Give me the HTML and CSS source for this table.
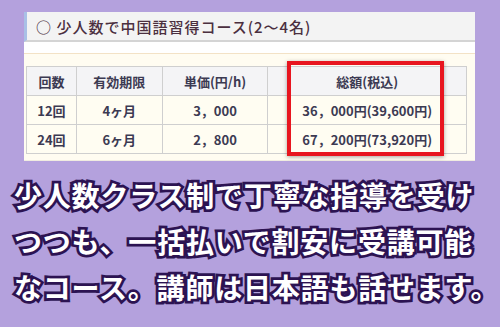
FILE: index.html
```html
<!DOCTYPE html>
<html lang="ja">
<head>
<meta charset="utf-8">
<link rel="stylesheet" href="styles.css">
</head>
<body>
<div class="panel">
  <div class="panel-head">○ 少人数で中国語習得コース(2～4名)</div>
  <div class="panel-body">
    <div class="table-wrap">
      <table class="price">
        <colgroup>
          <col class="c1"><col class="c2"><col class="c3"><col class="c4">
        </colgroup>
        <thead>
          <tr><th>回数</th><th>有効期限</th><th>単価(円/h)</th><th>総額(税込)</th></tr>
        </thead>
        <tbody>
          <tr><td>12回</td><td>4ヶ月</td><td>3，000</td><td>36，000円(39,600円)</td></tr>
          <tr><td>24回</td><td>6ヶ月</td><td>2，800</td><td>67，200円(73,920円)</td></tr>
        </tbody>
      </table>
      <div class="highlight"></div>
    </div>
  </div>
</div>
<p class="caption">少人数クラス制で丁寧な指導を受け<br>つつも、一括払いで割安に受講可能<br>なコース。講師は日本語も話せます。</p>
</body>
</html>
```

FILE: styles.css
```css
html, body {
  margin: 0;
  padding: 0;
}
body {
  width: 500px;
  height: 327px;
  overflow: hidden;
  background: #b4a1dd;
  font-family: "Noto Sans CJK JP", "Noto Sans", sans-serif;
}
.panel {
  margin: 12px 0 0 24px;
  width: 451px;
  background: #ffffff;
}
.panel-head {
  height: 30px;
  box-sizing: border-box;
  border-left: 3px solid #a9c0e6;
  border-bottom: 2px solid #d4d4d4;
  background: #f3f3f3;
  padding: 0 0 0 9px;
  line-height: 30px;
  font-size: 15px;
  font-weight: 500;
  color: #4b2f3f;
  letter-spacing: 1px;
}
.panel-body {
  margin-top: 11px;
  border-top: 1px solid #f3e2c6;
  background: #fffcf1;
  padding: 12px 8px 6px 2px;
  border-bottom: 1px solid #f0ece0;
}
.table-wrap {
  position: relative;
}
.price {
  width: 441px;
  border-collapse: collapse;
  font-size: 13px;
  font-weight: 700;
  color: #3c3a52;
}
.c1 { width: 50px; }
.c2 { width: 86px; }
.c3 { width: 106px; }
.c4 { width: 199px; }
.price th, .price td {
  border: 1px solid #cfcfcf;
  height: 28px;
  padding: 0;
  text-align: center;
  vertical-align: middle;
}
.price th {
  background: #f4f4f6;
}
.price td {
  background: #fffdf2;
}
.highlight {
  position: absolute;
  left: 261px;
  top: -5px;
  width: 157px;
  height: 95px;
  box-sizing: border-box;
  border: 4px solid #e8151f;
  box-shadow: 0 1px 4px rgba(0, 0, 0, 0.35);
}
.caption {
  margin: 11px 0 0 14px;
  width: max-content;
  font-size: 28px;
  line-height: 46px;
  font-weight: 700;
  color: #ffffff;
  letter-spacing: 0.8px;
  white-space: nowrap;
  -webkit-text-stroke: 5.5px #2c1352;
  paint-order: stroke fill;
}
```
